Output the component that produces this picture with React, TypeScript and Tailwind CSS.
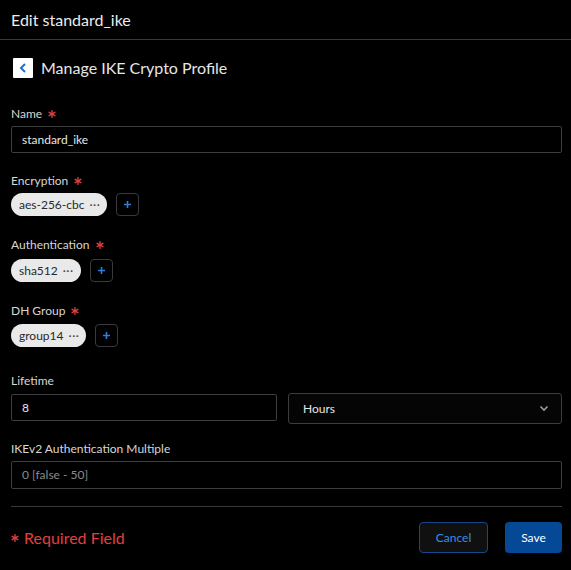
import React from 'react';

const font = { fontFamily: 'Lato, "Noto Sans", sans-serif' };

// six-spoke asterisk used for required fields
const Star = ({ size = 8 }: { size?: number }) => (
  <svg width={size} height={size} viewBox="0 0 10 10">
    <g stroke="#e0403f" strokeWidth="1.7" strokeLinecap="round">
      <path d="M5 0.8v8.4" />
      <path d="M1.4 2.9l7.2 4.2" />
      <path d="M1.4 7.1l7.2-4.2" />
    </g>
  </svg>
);

const Label = ({ children, required }: { children: React.ReactNode; required?: boolean }) => (
  <div className="flex items-center h-4 text-[12px] text-[#d6d6d6]">
    {children}
    {required && (
      <span className="ml-[6px] flex items-center">
        <Star size={8} />
      </span>
    )}
  </div>
);

const Chip = ({ text }: { text: string }) => (
  <div className="flex items-center h-[23px] pl-2 pr-[7px] rounded-full bg-[#e9e9e9] text-[#2a2a2a] text-[12px]">
    <span>{text}</span>
    <span className="ml-[5px] tracking-[0.5px] text-[#444]">···</span>
  </div>
);

const PlusBtn = () => (
  <button className="flex items-center justify-center w-[23px] h-[23px] rounded-[4px] border border-[#3a3a3a] bg-black">
    <svg width="9" height="9" viewBox="0 0 9 9">
      <path d="M4.5 1v7M1 4.5h7" stroke="#2f7fd6" strokeWidth="1.6" />
    </svg>
  </button>
);

const ChipRow = ({ text }: { text: string }) => (
  <div className="flex items-center gap-[9px]">
    <Chip text={text} />
    <PlusBtn />
  </div>
);

export default function App() {
  return (
    <div className="w-[571px] h-[570px] bg-black text-[#e8e8e8] overflow-hidden" style={font}>
      <div className="h-10 flex items-center px-[11px] border-b border-[#3a3a3a] text-[16px] text-[#ececec]">
        Edit standard_ike
      </div>

      <div className="pl-[11px] pr-[9px]">
        <div className="flex items-center mt-[18px] h-5">
          <button className="ml-[2px] flex items-center justify-center w-5 h-5 bg-white rounded-[1px]">
            <svg width="10" height="12" viewBox="0 0 10 12">
              <path d="M7 2L3 6l4 4" stroke="#1f6fd0" strokeWidth="2" fill="none" />
            </svg>
          </button>
          <span className="ml-2 text-[16px] text-[#e6e6e6]">Manage IKE Crypto Profile</span>
        </div>

        <div className="mt-[28px]">
          <Label required>Name</Label>
          <div className="mt-1 h-[27px] flex items-center px-[10px] border border-[#3d3d3d] rounded-[2px] text-[12px] text-[#e6e6e6]">
            standard_ike
          </div>
        </div>

        <div className="mt-[20px]">
          <Label required>Encryption</Label>
          <div className="mt-1">
            <ChipRow text="aes-256-cbc" />
          </div>
        </div>

        <div className="mt-[21px]">
          <Label required>Authentication</Label>
          <div className="mt-[6px]">
            <ChipRow text="sha512" />
          </div>
        </div>

        <div className="mt-[21px]">
          <Label required>DH Group</Label>
          <div className="mt-[5px]">
            <ChipRow text="group14" />
          </div>
        </div>

        <div className="mt-[26px]">
          <Label>Lifetime</Label>
          <div className="mt-1 flex items-start gap-[11px]">
            <div className="w-[266px] mt-[1px] h-[27px] flex items-center px-[10px] border border-[#3d3d3d] rounded-[2px] text-[12px] text-[#e6e6e6]">
              8
            </div>
            <div className="flex-1 h-[31px] flex items-center justify-between pl-[14px] pr-3 border border-[#3d3d3d] rounded-[3px] bg-[#050505] text-[12px] text-[#e6e6e6]">
              <span>Hours</span>
              <svg width="10" height="7" viewBox="0 0 10 7">
                <path d="M1.5 1.5L5 5l3.5-3.5" stroke="#9a9a9a" strokeWidth="1.6" fill="none" />
              </svg>
            </div>
          </div>
        </div>

        <div className="mt-[17px]">
          <Label>IKEv2 Authentication Multiple</Label>
          <div className="mt-1 h-[28px] flex items-center px-[10px] border border-[#3d3d3d] rounded-[2px] text-[12px] text-[#8a8a8a]">
            0 [false - 50]
          </div>
        </div>

        <div className="mt-[17px] border-t border-[#3a3a3a]" />

        <div className="mt-[15px] flex items-center justify-between">
          <div className="flex items-center text-[16px] text-[#e0403f]">
            <span className="mr-[5px] flex items-center">
              <Star size={8} />
            </span>
            <span>Required Field</span>
          </div>
          <div className="flex items-center gap-[17px]">
            <button className="w-[69px] h-[31px] rounded-[4px] border border-[#16488a] bg-[#101010] text-[12px] text-[#3a8fe0]">
              Cancel
            </button>
            <button className="w-[57px] h-[31px] rounded-[4px] bg-[#044896] text-[12px] text-white">
              Save
            </button>
          </div>
        </div>
      </div>
    </div>
  );
}
